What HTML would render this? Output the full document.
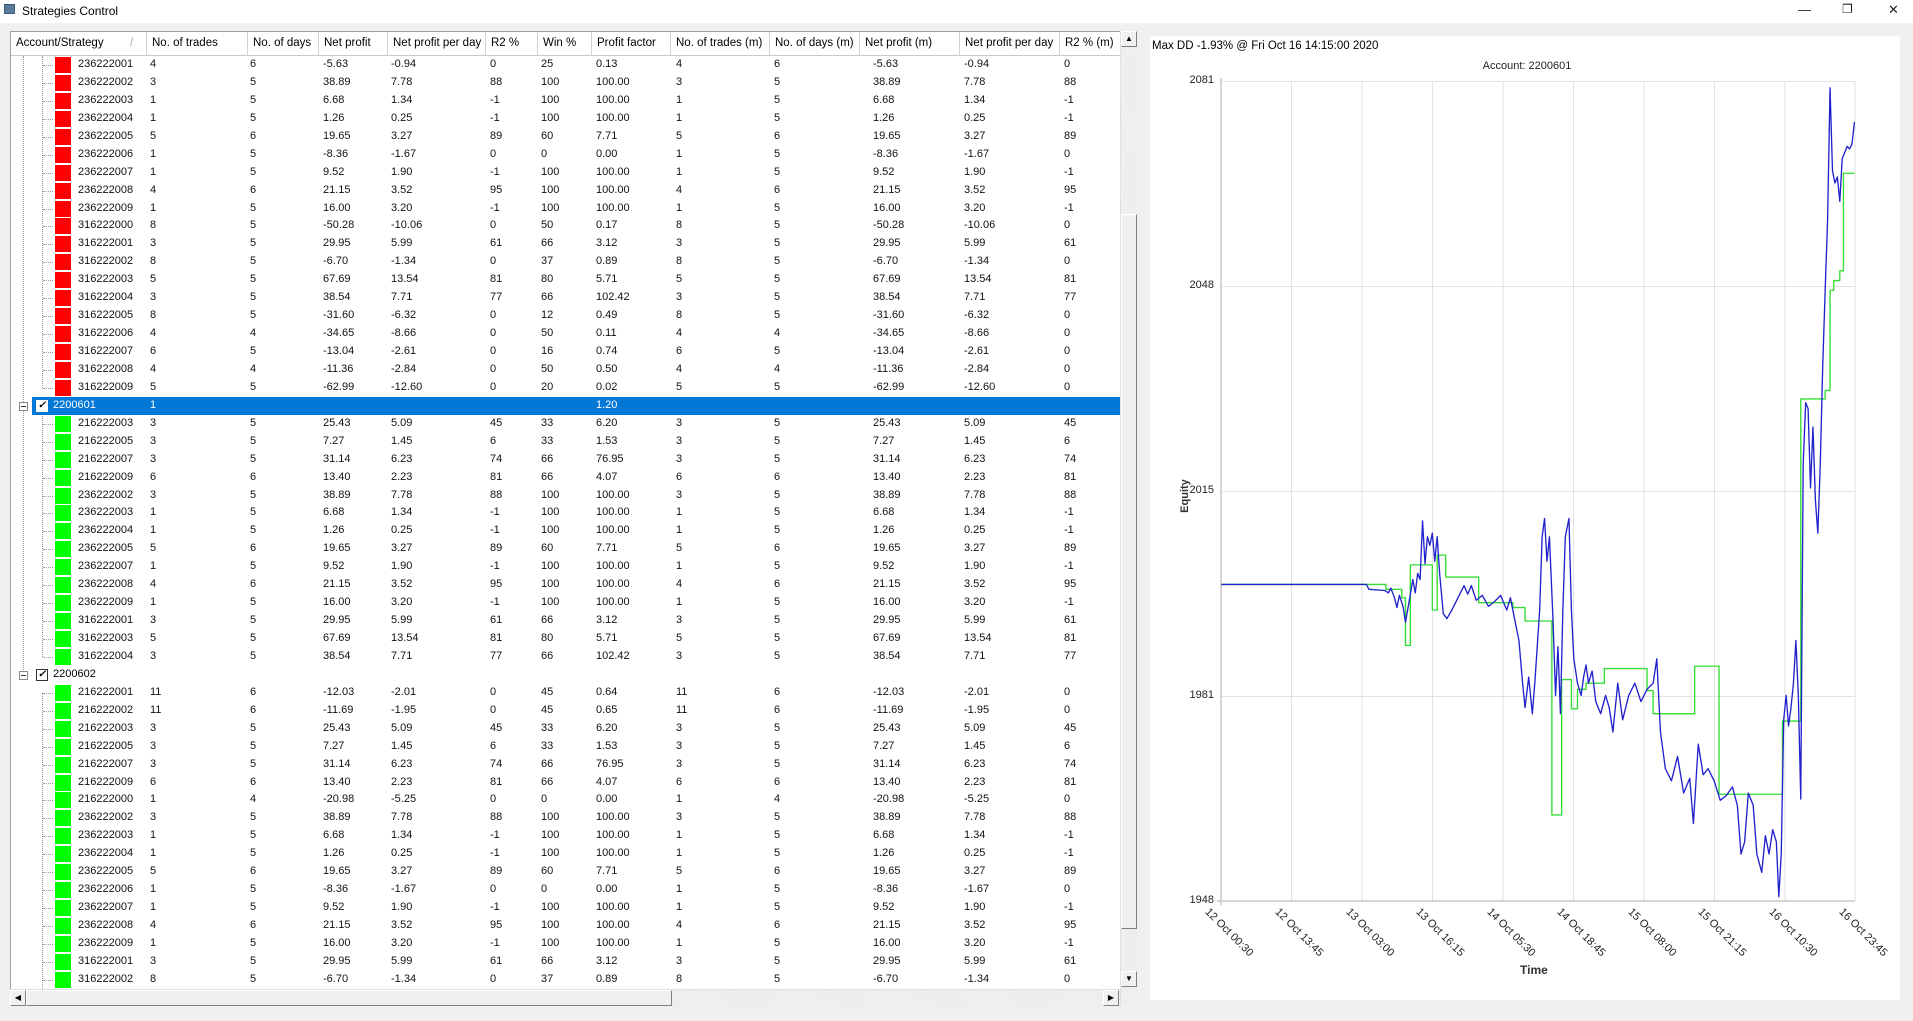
<!DOCTYPE html>
<html><head><meta charset="utf-8"><style>
*{margin:0;padding:0;box-sizing:border-box}
body{width:1913px;height:1021px;background:#f0f0f0;font-family:"Liberation Sans",sans-serif;font-size:11px;color:#000;position:relative;overflow:hidden}
.title{position:absolute;left:0;top:0;width:1913px;height:23px;background:#fff}
.title .ic{position:absolute;left:4px;top:4px;width:11px;height:10px;background:#5a7a9a;border:1px solid #3a5a7a}
.title .t{position:absolute;left:22px;top:4px;font-size:12px}
.wb{position:absolute;top:2px;font-size:13px;color:#222}
.tbl{position:absolute;left:10px;top:31px;width:1127px;height:975px;background:#fff;border:1px solid #a0a0a0;overflow:hidden}
.hdr{position:absolute;left:0;top:0;height:24px;width:1110px;background:#fff;border-bottom:1px solid #c8c8c8}
.hdr span{position:absolute;top:0;height:24px;line-height:23px;padding-left:5px;border-left:1px solid #d0d0d0;white-space:nowrap;font-size:11.5px}
.rows{position:absolute;left:-10px;top:24px;width:1120px}
.r{position:relative;height:17.94px;line-height:17.94px;display:grid;grid-template-columns:72px 100px 73px 68px 99px 51px 55px 80px 98px 99px 91px 100px 60px;padding-left:77px;white-space:nowrap;color:#111}
.r::before{content:"";position:absolute;left:54px;top:1px;width:16px;height:16px;background:#f00}
.r.g::before{background:#0f0}
.r::after{content:"";position:absolute;left:42px;top:9px;width:10px;border-top:1px dotted #999}
.gr{position:relative;height:17.94px;line-height:17.94px;display:grid;grid-template-columns:97px 100px 73px 68px 99px 51px 55px 80px 98px 99px 91px 100px 60px;padding-left:52px;white-space:nowrap}
.gr .ex{position:absolute;left:18px;top:5px;width:9px;height:9px;border:1px solid #8a8a8a;background:#fff}
.gr .ex::after{content:"";position:absolute;left:1px;top:3px;width:5px;border-top:1px solid #333}
.gr .cb{position:absolute;left:35px;top:3px;width:12px;height:12px;border:1px solid #333;background:#fff;font-size:10px;line-height:10px;text-align:center;font-weight:bold}
.sel{background:linear-gradient(to right,transparent 31px,#0078d7 31px,#0078d7 1119px,transparent 1119px);color:#fff}
.sel .cb{border-color:#fff}
.vl{position:absolute;border-left:1px dotted #999;width:0}
.vs{position:absolute;left:1120px;top:31px;width:17px;height:975px;background:repeating-linear-gradient(45deg,#f4f4f4 0 1px,#e8e8e8 1px 2px);border-left:1px solid #e0e0e0}
.hs{position:absolute;left:10px;top:989px;width:1110px;height:17px;background:repeating-linear-gradient(45deg,#f4f4f4 0 1px,#e8e8e8 1px 2px);border-top:1px solid #e0e0e0}
.btn{position:absolute;background:#f0f0f0;border:1px solid;border-color:#fff #808080 #808080 #fff;font-size:8px;line-height:14px;text-align:center;color:#000}
.chart{position:absolute;left:1150px;top:36px;width:750px;height:964px;background:#fff;border-radius:3px}
.yl{position:absolute;width:50px;text-align:right;font-size:11px;color:#222}
.xl{position:absolute;font-size:11px;color:#222;transform:rotate(45deg);transform-origin:0 0;white-space:nowrap}
</style></head><body>
<div class="title"><div class="ic"></div><div class="t">Strategies Control</div>
<div class="wb" style="left:1798px">&#8212;</div><div class="wb" style="left:1842px;font-size:12px">&#10064;</div><div class="wb" style="left:1888px">&#10005;</div></div>

<div class="tbl">
<div class="hdr">
<span style="left:0;width:135px;border-left:none">Account/Strategy<i style="position:absolute;left:119px;color:#aaa;font-style:normal">/</i></span>
<span style="left:135px">No. of trades</span>
<span style="left:236px">No. of days</span>
<span style="left:307px">Net profit</span>
<span style="left:376px">Net profit per day</span>
<span style="left:474px">R2 %</span>
<span style="left:526px">Win %</span>
<span style="left:580px">Profit factor</span>
<span style="left:659px">No. of trades (m)</span>
<span style="left:758px">No. of days (m)</span>
<span style="left:848px">Net profit (m)</span>
<span style="left:948px">Net profit per day</span>
<span style="left:1048px">R2 % (m)</span>
</div>
<div class="rows">
<div class="vl" style="left:22px;top:0;height:620px"></div>
<div class="vl" style="left:41px;top:0;height:332px"></div>
<div class="vl" style="left:41px;top:358px;height:243px"></div>
<div class="vl" style="left:41px;top:637px;height:340px"></div>
<div class="r"><span>236222001</span><span>4</span><span>6</span><span>-5.63</span><span>-0.94</span><span>0</span><span>25</span><span>0.13</span><span>4</span><span>6</span><span>-5.63</span><span>-0.94</span><span>0</span></div>
<div class="r"><span>236222002</span><span>3</span><span>5</span><span>38.89</span><span>7.78</span><span>88</span><span>100</span><span>100.00</span><span>3</span><span>5</span><span>38.89</span><span>7.78</span><span>88</span></div>
<div class="r"><span>236222003</span><span>1</span><span>5</span><span>6.68</span><span>1.34</span><span>-1</span><span>100</span><span>100.00</span><span>1</span><span>5</span><span>6.68</span><span>1.34</span><span>-1</span></div>
<div class="r"><span>236222004</span><span>1</span><span>5</span><span>1.26</span><span>0.25</span><span>-1</span><span>100</span><span>100.00</span><span>1</span><span>5</span><span>1.26</span><span>0.25</span><span>-1</span></div>
<div class="r"><span>236222005</span><span>5</span><span>6</span><span>19.65</span><span>3.27</span><span>89</span><span>60</span><span>7.71</span><span>5</span><span>6</span><span>19.65</span><span>3.27</span><span>89</span></div>
<div class="r"><span>236222006</span><span>1</span><span>5</span><span>-8.36</span><span>-1.67</span><span>0</span><span>0</span><span>0.00</span><span>1</span><span>5</span><span>-8.36</span><span>-1.67</span><span>0</span></div>
<div class="r"><span>236222007</span><span>1</span><span>5</span><span>9.52</span><span>1.90</span><span>-1</span><span>100</span><span>100.00</span><span>1</span><span>5</span><span>9.52</span><span>1.90</span><span>-1</span></div>
<div class="r"><span>236222008</span><span>4</span><span>6</span><span>21.15</span><span>3.52</span><span>95</span><span>100</span><span>100.00</span><span>4</span><span>6</span><span>21.15</span><span>3.52</span><span>95</span></div>
<div class="r"><span>236222009</span><span>1</span><span>5</span><span>16.00</span><span>3.20</span><span>-1</span><span>100</span><span>100.00</span><span>1</span><span>5</span><span>16.00</span><span>3.20</span><span>-1</span></div>
<div class="r"><span>316222000</span><span>8</span><span>5</span><span>-50.28</span><span>-10.06</span><span>0</span><span>50</span><span>0.17</span><span>8</span><span>5</span><span>-50.28</span><span>-10.06</span><span>0</span></div>
<div class="r"><span>316222001</span><span>3</span><span>5</span><span>29.95</span><span>5.99</span><span>61</span><span>66</span><span>3.12</span><span>3</span><span>5</span><span>29.95</span><span>5.99</span><span>61</span></div>
<div class="r"><span>316222002</span><span>8</span><span>5</span><span>-6.70</span><span>-1.34</span><span>0</span><span>37</span><span>0.89</span><span>8</span><span>5</span><span>-6.70</span><span>-1.34</span><span>0</span></div>
<div class="r"><span>316222003</span><span>5</span><span>5</span><span>67.69</span><span>13.54</span><span>81</span><span>80</span><span>5.71</span><span>5</span><span>5</span><span>67.69</span><span>13.54</span><span>81</span></div>
<div class="r"><span>316222004</span><span>3</span><span>5</span><span>38.54</span><span>7.71</span><span>77</span><span>66</span><span>102.42</span><span>3</span><span>5</span><span>38.54</span><span>7.71</span><span>77</span></div>
<div class="r"><span>316222005</span><span>8</span><span>5</span><span>-31.60</span><span>-6.32</span><span>0</span><span>12</span><span>0.49</span><span>8</span><span>5</span><span>-31.60</span><span>-6.32</span><span>0</span></div>
<div class="r"><span>316222006</span><span>4</span><span>4</span><span>-34.65</span><span>-8.66</span><span>0</span><span>50</span><span>0.11</span><span>4</span><span>4</span><span>-34.65</span><span>-8.66</span><span>0</span></div>
<div class="r"><span>316222007</span><span>6</span><span>5</span><span>-13.04</span><span>-2.61</span><span>0</span><span>16</span><span>0.74</span><span>6</span><span>5</span><span>-13.04</span><span>-2.61</span><span>0</span></div>
<div class="r"><span>316222008</span><span>4</span><span>4</span><span>-11.36</span><span>-2.84</span><span>0</span><span>50</span><span>0.50</span><span>4</span><span>4</span><span>-11.36</span><span>-2.84</span><span>0</span></div>
<div class="r"><span>316222009</span><span>5</span><span>5</span><span>-62.99</span><span>-12.60</span><span>0</span><span>20</span><span>0.02</span><span>5</span><span>5</span><span>-62.99</span><span>-12.60</span><span>0</span></div>
<div class="gr sel"><i class="ex"></i><i class="cb" style="color:#000">&#10003;</i><span>2200601</span><span>1</span><span></span><span></span><span></span><span></span><span></span><span>1.20</span></div>
<div class="r g"><span>216222003</span><span>3</span><span>5</span><span>25.43</span><span>5.09</span><span>45</span><span>33</span><span>6.20</span><span>3</span><span>5</span><span>25.43</span><span>5.09</span><span>45</span></div>
<div class="r g"><span>216222005</span><span>3</span><span>5</span><span>7.27</span><span>1.45</span><span>6</span><span>33</span><span>1.53</span><span>3</span><span>5</span><span>7.27</span><span>1.45</span><span>6</span></div>
<div class="r g"><span>216222007</span><span>3</span><span>5</span><span>31.14</span><span>6.23</span><span>74</span><span>66</span><span>76.95</span><span>3</span><span>5</span><span>31.14</span><span>6.23</span><span>74</span></div>
<div class="r g"><span>216222009</span><span>6</span><span>6</span><span>13.40</span><span>2.23</span><span>81</span><span>66</span><span>4.07</span><span>6</span><span>6</span><span>13.40</span><span>2.23</span><span>81</span></div>
<div class="r g"><span>236222002</span><span>3</span><span>5</span><span>38.89</span><span>7.78</span><span>88</span><span>100</span><span>100.00</span><span>3</span><span>5</span><span>38.89</span><span>7.78</span><span>88</span></div>
<div class="r g"><span>236222003</span><span>1</span><span>5</span><span>6.68</span><span>1.34</span><span>-1</span><span>100</span><span>100.00</span><span>1</span><span>5</span><span>6.68</span><span>1.34</span><span>-1</span></div>
<div class="r g"><span>236222004</span><span>1</span><span>5</span><span>1.26</span><span>0.25</span><span>-1</span><span>100</span><span>100.00</span><span>1</span><span>5</span><span>1.26</span><span>0.25</span><span>-1</span></div>
<div class="r g"><span>236222005</span><span>5</span><span>6</span><span>19.65</span><span>3.27</span><span>89</span><span>60</span><span>7.71</span><span>5</span><span>6</span><span>19.65</span><span>3.27</span><span>89</span></div>
<div class="r g"><span>236222007</span><span>1</span><span>5</span><span>9.52</span><span>1.90</span><span>-1</span><span>100</span><span>100.00</span><span>1</span><span>5</span><span>9.52</span><span>1.90</span><span>-1</span></div>
<div class="r g"><span>236222008</span><span>4</span><span>6</span><span>21.15</span><span>3.52</span><span>95</span><span>100</span><span>100.00</span><span>4</span><span>6</span><span>21.15</span><span>3.52</span><span>95</span></div>
<div class="r g"><span>236222009</span><span>1</span><span>5</span><span>16.00</span><span>3.20</span><span>-1</span><span>100</span><span>100.00</span><span>1</span><span>5</span><span>16.00</span><span>3.20</span><span>-1</span></div>
<div class="r g"><span>316222001</span><span>3</span><span>5</span><span>29.95</span><span>5.99</span><span>61</span><span>66</span><span>3.12</span><span>3</span><span>5</span><span>29.95</span><span>5.99</span><span>61</span></div>
<div class="r g"><span>316222003</span><span>5</span><span>5</span><span>67.69</span><span>13.54</span><span>81</span><span>80</span><span>5.71</span><span>5</span><span>5</span><span>67.69</span><span>13.54</span><span>81</span></div>
<div class="r g"><span>316222004</span><span>3</span><span>5</span><span>38.54</span><span>7.71</span><span>77</span><span>66</span><span>102.42</span><span>3</span><span>5</span><span>38.54</span><span>7.71</span><span>77</span></div>
<div class="gr"><i class="ex"></i><i class="cb">&#10003;</i><span>2200602</span></div>
<div class="r g"><span>216222001</span><span>11</span><span>6</span><span>-12.03</span><span>-2.01</span><span>0</span><span>45</span><span>0.64</span><span>11</span><span>6</span><span>-12.03</span><span>-2.01</span><span>0</span></div>
<div class="r g"><span>216222002</span><span>11</span><span>6</span><span>-11.69</span><span>-1.95</span><span>0</span><span>45</span><span>0.65</span><span>11</span><span>6</span><span>-11.69</span><span>-1.95</span><span>0</span></div>
<div class="r g"><span>216222003</span><span>3</span><span>5</span><span>25.43</span><span>5.09</span><span>45</span><span>33</span><span>6.20</span><span>3</span><span>5</span><span>25.43</span><span>5.09</span><span>45</span></div>
<div class="r g"><span>216222005</span><span>3</span><span>5</span><span>7.27</span><span>1.45</span><span>6</span><span>33</span><span>1.53</span><span>3</span><span>5</span><span>7.27</span><span>1.45</span><span>6</span></div>
<div class="r g"><span>216222007</span><span>3</span><span>5</span><span>31.14</span><span>6.23</span><span>74</span><span>66</span><span>76.95</span><span>3</span><span>5</span><span>31.14</span><span>6.23</span><span>74</span></div>
<div class="r g"><span>216222009</span><span>6</span><span>6</span><span>13.40</span><span>2.23</span><span>81</span><span>66</span><span>4.07</span><span>6</span><span>6</span><span>13.40</span><span>2.23</span><span>81</span></div>
<div class="r g"><span>216222000</span><span>1</span><span>4</span><span>-20.98</span><span>-5.25</span><span>0</span><span>0</span><span>0.00</span><span>1</span><span>4</span><span>-20.98</span><span>-5.25</span><span>0</span></div>
<div class="r g"><span>236222002</span><span>3</span><span>5</span><span>38.89</span><span>7.78</span><span>88</span><span>100</span><span>100.00</span><span>3</span><span>5</span><span>38.89</span><span>7.78</span><span>88</span></div>
<div class="r g"><span>236222003</span><span>1</span><span>5</span><span>6.68</span><span>1.34</span><span>-1</span><span>100</span><span>100.00</span><span>1</span><span>5</span><span>6.68</span><span>1.34</span><span>-1</span></div>
<div class="r g"><span>236222004</span><span>1</span><span>5</span><span>1.26</span><span>0.25</span><span>-1</span><span>100</span><span>100.00</span><span>1</span><span>5</span><span>1.26</span><span>0.25</span><span>-1</span></div>
<div class="r g"><span>236222005</span><span>5</span><span>6</span><span>19.65</span><span>3.27</span><span>89</span><span>60</span><span>7.71</span><span>5</span><span>6</span><span>19.65</span><span>3.27</span><span>89</span></div>
<div class="r g"><span>236222006</span><span>1</span><span>5</span><span>-8.36</span><span>-1.67</span><span>0</span><span>0</span><span>0.00</span><span>1</span><span>5</span><span>-8.36</span><span>-1.67</span><span>0</span></div>
<div class="r g"><span>236222007</span><span>1</span><span>5</span><span>9.52</span><span>1.90</span><span>-1</span><span>100</span><span>100.00</span><span>1</span><span>5</span><span>9.52</span><span>1.90</span><span>-1</span></div>
<div class="r g"><span>236222008</span><span>4</span><span>6</span><span>21.15</span><span>3.52</span><span>95</span><span>100</span><span>100.00</span><span>4</span><span>6</span><span>21.15</span><span>3.52</span><span>95</span></div>
<div class="r g"><span>236222009</span><span>1</span><span>5</span><span>16.00</span><span>3.20</span><span>-1</span><span>100</span><span>100.00</span><span>1</span><span>5</span><span>16.00</span><span>3.20</span><span>-1</span></div>
<div class="r g"><span>316222001</span><span>3</span><span>5</span><span>29.95</span><span>5.99</span><span>61</span><span>66</span><span>3.12</span><span>3</span><span>5</span><span>29.95</span><span>5.99</span><span>61</span></div>
<div class="r g"><span>316222002</span><span>8</span><span>5</span><span>-6.70</span><span>-1.34</span><span>0</span><span>37</span><span>0.89</span><span>8</span><span>5</span><span>-6.70</span><span>-1.34</span><span>0</span></div>
<div class="r g"><span></span></div>
</div>
</div>

<div class="vs">
<div class="btn" style="left:0;top:0;width:16px;height:16px">&#9650;</div>
<div class="btn" style="left:0;top:183px;width:16px;height:715px"></div>
<div class="btn" style="left:0;top:940px;width:16px;height:16px">&#9660;</div>
</div>
<div class="hs">
<div class="btn" style="left:0;top:0;width:16px;height:16px">&#9664;</div>
<div class="btn" style="left:16px;top:0;width:646px;height:16px"></div>
<div class="btn" style="left:1093px;top:0;width:16px;height:16px">&#9654;</div>
</div>

<div class="chart"></div>
<div style="position:absolute;left:1152px;top:40px;font-size:11.5px">Max DD -1.93% @ Fri Oct 16 14:15:00 2020</div>
<div style="position:absolute;left:1477px;top:60px;width:100px;text-align:center;font-size:11px;color:#222">Account: 2200601</div>
<div class="yl" style="left:1164px;top:74px">2081</div>
<div class="yl" style="left:1164px;top:279px">2048</div>
<div class="yl" style="left:1164px;top:484px">2015</div>
<div class="yl" style="left:1164px;top:689px">1981</div>
<div class="yl" style="left:1164px;top:894px">1948</div>
<div style="position:absolute;left:1160px;top:490px;transform:rotate(-90deg);font-size:11px;font-weight:bold;color:#333;transform-origin:center;width:50px;text-align:center">Equity</div>
<div style="position:absolute;left:1520px;top:963px;font-size:12px;font-weight:bold;color:#333">Time</div>
<div class="xl" style="left:1211px;top:906px">12 Oct 00:30</div>
<div class="xl" style="left:1281px;top:906px">12 Oct 13:45</div>
<div class="xl" style="left:1352px;top:906px">13 Oct 03:00</div>
<div class="xl" style="left:1422px;top:906px">13 Oct 16:15</div>
<div class="xl" style="left:1493px;top:906px">14 Oct 05:30</div>
<div class="xl" style="left:1563px;top:906px">14 Oct 18:45</div>
<div class="xl" style="left:1634px;top:906px">15 Oct 08:00</div>
<div class="xl" style="left:1704px;top:906px">15 Oct 21:15</div>
<div class="xl" style="left:1775px;top:906px">16 Oct 10:30</div>
<div class="xl" style="left:1845px;top:906px">16 Oct 23:45</div>

<svg style="position:absolute;left:0;top:0" width="1913" height="1021">
<g stroke="#e2e2e2" stroke-width="1">
<line x1="1291.5" y1="81" x2="1291.5" y2="901"/><line x1="1362" y1="81" x2="1362" y2="901"/><line x1="1432.5" y1="81" x2="1432.5" y2="901"/><line x1="1503" y1="81" x2="1503" y2="901"/><line x1="1573.5" y1="81" x2="1573.5" y2="901"/><line x1="1644" y1="81" x2="1644" y2="901"/><line x1="1714.5" y1="81" x2="1714.5" y2="901"/><line x1="1785" y1="81" x2="1785" y2="901"/><line x1="1855" y1="81" x2="1855" y2="901"/>
<line x1="1221" y1="81.5" x2="1855" y2="81.5"/><line x1="1221" y1="286.5" x2="1855" y2="286.5"/><line x1="1221" y1="491.5" x2="1855" y2="491.5"/><line x1="1221" y1="696.5" x2="1855" y2="696.5"/>
</g>
<g stroke="#c8c8c8" stroke-width="1.5"><line x1="1221" y1="78" x2="1221" y2="905"/><line x1="1217" y1="901" x2="1855" y2="901"/></g>
<g transform="scale(1.22003)" fill="none" stroke-width="1.1" stroke-linejoin="round">
<polyline stroke="#33dd33" points="1001,479 1136,479 1136,483 1149,483 1149,490 1152,490 1152,529 1156,529 1156,463 1174,463 1174,500 1178,500 1178,455 1185,455 1185,473 1212,473 1212,494 1240,494 1240,498 1250,498 1250,509 1272,509 1272,668 1280,668 1280,557 1288,557 1288,581 1293,581 1293,565 1300,565 1300,560 1315,560 1315,548 1350,548 1350,566 1355,566 1355,585 1389,585 1389,546 1409,546 1409,651 1461,651 1461,591 1476,591 1476,327 1496,327 1496,320 1500,320 1500,238 1503,238 1503,230 1508,230 1508,222 1511,222 1511,142 1520,142"/>
<polyline stroke="#2222cc" points="1001,479 1120,479 1122,483 1135,484 1138,486 1140,482 1143,490 1145,498 1147,488 1150,497 1152,510 1155,493 1158,475 1160,486 1162,470 1164,475 1166,427 1168,462 1170,440 1172,447 1174,437 1176,460 1178,440 1180,470 1183,503 1186,507 1190,500 1195,490 1200,480 1203,487 1206,480 1210,492 1215,488 1220,497 1225,493 1230,488 1235,500 1238,490 1242,510 1245,525 1248,560 1250,580 1253,555 1256,585 1258,560 1262,500 1264,440 1266,425 1268,460 1270,440 1273,510 1275,570 1277,530 1279,585 1281,500 1283,440 1286,425 1288,500 1290,540 1293,560 1296,570 1298,555 1300,545 1302,560 1305,550 1308,575 1312,585 1316,570 1319,580 1322,600 1326,560 1330,590 1335,570 1340,560 1345,575 1350,565 1355,560 1358,540 1361,600 1365,630 1370,640 1375,620 1380,650 1385,638 1388,675 1392,610 1396,635 1400,630 1405,640 1410,656 1415,652 1420,645 1424,660 1427,700 1430,690 1433,650 1437,660 1440,700 1444,715 1447,685 1450,700 1453,680 1456,690 1458,735 1460,700 1462,590 1464,570 1466,595 1468,580 1470,560 1472,525 1474,570 1476,655 1478,380 1480,330 1482,335 1484,400 1486,350 1488,410 1490,437 1492,380 1494,300 1496,238 1498,180 1500,72 1502,140 1504,150 1506,145 1508,165 1510,130 1512,125 1514,120 1516,122 1518,118 1520,100"/>
</g>
</svg>
</body></html>
